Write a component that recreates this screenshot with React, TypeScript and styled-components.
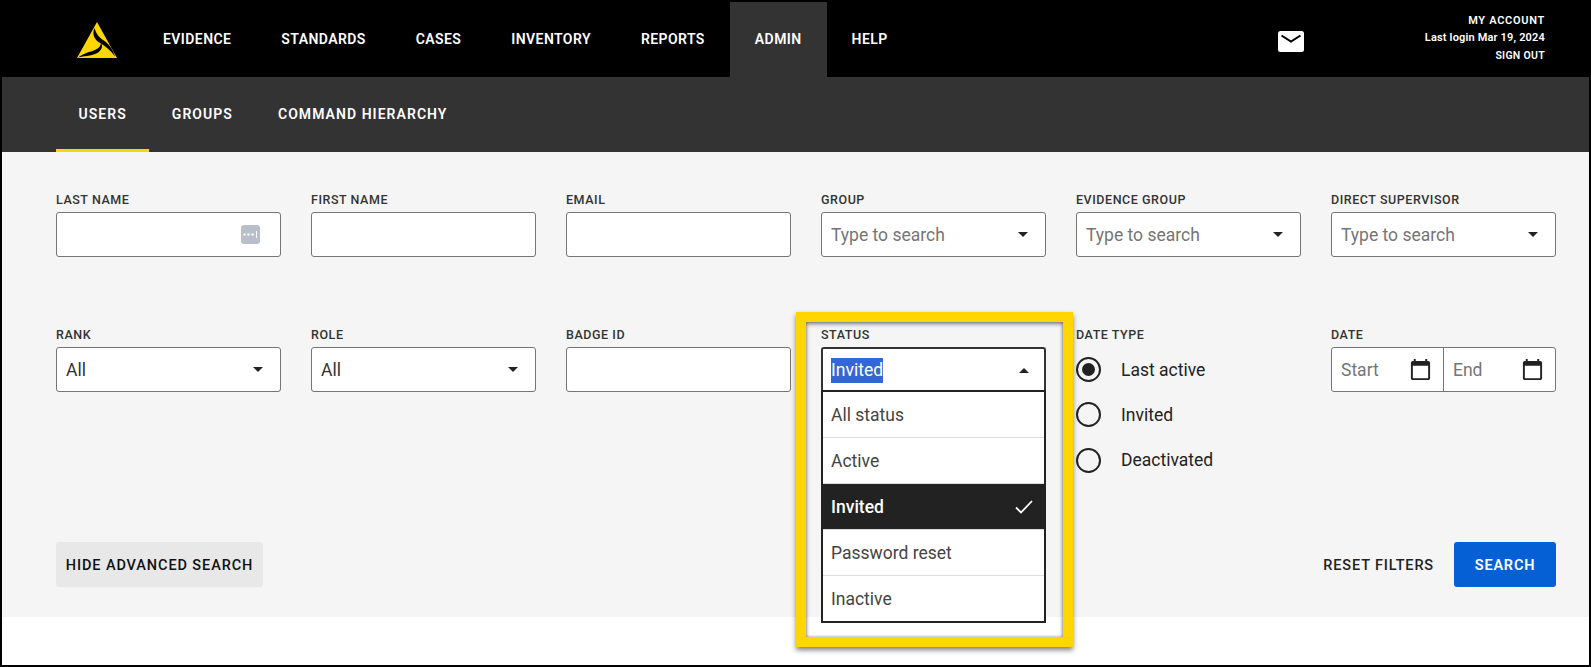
import * as React from "react";
import styled, { createGlobalStyle } from "styled-components";

const GlobalStyle = createGlobalStyle`
  html, body { margin: 0; padding: 0; background: #fff; }
  body { font-family: Roboto, "Liberation Sans", sans-serif; }
  * { box-sizing: border-box; }
`;

const Frame = styled.div`
  width: 1591px;
  height: 667px;
  border: 2px solid #000;
  overflow: hidden;
  background: #fff;
  display: flex;
  flex-direction: column;
`;

const Header = styled.header`
  height: 75px;
  background: #000;
  display: flex;
  align-items: stretch;
  padding: 0 44px 0 74px;
`;

const LogoSlot = styled.div`
  width: 62px;
  display: flex;
  align-items: center;
  padding-top: 2px;
`;

const NavLink = styled.a<{ $active?: boolean }>`
  display: flex;
  align-items: center;
  padding: 0 25px 2px;
  color: #fff;
  font-size: 14px;
  font-weight: 600;
  letter-spacing: 0.42px;
  background: ${(p) => (p.$active ? "#333" : "transparent")};
`;

const HeaderRight = styled.div`
  margin-left: auto;
  display: flex;
  align-items: center;
`;

const MailSlot = styled.div`
  display: flex;
  margin-right: 121px;
  margin-top: 4px;
`;

const AccountBlock = styled.div`
  display: flex;
  flex-direction: column;
  align-items: flex-end;
  gap: 4px;
  color: #fff;
  line-height: 13.5px;
  font-weight: 600;
  margin-top: -3px;
`;

const AccountLine = styled.span<{ $size: number; $spacing: number }>`
  font-size: ${(p) => p.$size}px;
  letter-spacing: ${(p) => p.$spacing}px;
`;

const SubNav = styled.nav`
  height: 75px;
  background: #333;
  display: flex;
  padding-left: 54px;
`;

const SubLink = styled.a<{ $active?: boolean }>`
  display: flex;
  align-items: center;
  padding: 3px 22.5px 2px;
  color: #fff;
  font-size: 14px;
  font-weight: 600;
  letter-spacing: 1.05px;
  border-bottom: 3px solid ${(p) => (p.$active ? "#ffd600" : "transparent")};
`;

const Content = styled.main`
  background: #f5f5f5;
  height: 465px;
  padding: 40px 33px 30px 54px;
`;

const FilterGrid = styled.div`
  display: grid;
  grid-template-columns: repeat(6, 225px);
  column-gap: 30px;
  row-gap: 70px;
  align-items: start;
`;

const Field = styled.div`
  position: relative;
`;

const Label = styled.label`
  display: block;
  height: 16px;
  margin-bottom: 4px;
  font-size: 12.5px;
  line-height: 16px;
  font-weight: 500;
  letter-spacing: 0.55px;
  color: #333;
`;

const TextBox = styled.div`
  height: 45px;
  background: #fff;
  border: 1px solid #757575;
  border-radius: 3px;
  display: flex;
  align-items: center;
  padding: 0 9px;
  font-size: 17.5px;
  color: #333;
`;

const KeyIcon = styled.svg`
  margin-left: auto;
  margin-right: 11px;
`;

const Placeholder = styled.span`
  color: #757575;
`;

const Caret = styled.span<{ $open?: boolean }>`
  margin-left: auto;
  margin-right: 8px;
  width: 0;
  height: 0;
  border-left: 5px solid transparent;
  border-right: 5px solid transparent;
  ${(p) =>
    p.$open ? "border-bottom: 5px solid #222;" : "border-top: 5px solid #222;"}
`;

const Combo = styled(TextBox)<{ $open?: boolean }>`
  ${(p) =>
    p.$open &&
    "height: 45px; border: 2px solid #333; border-bottom: 0; padding: 0 7px 0 8px; border-radius: 3px 3px 0 0;"}
`;

const Selection = styled.span`
  background: #3367d6;
  color: #fff;
  line-height: 25px;
`;

const Menu = styled.ul`
  position: absolute;
  z-index: 2;
  top: 63px;
  left: 0;
  right: 0;
  margin: 0;
  padding: 0;
  list-style: none;
  background: #fff;
  border: 2px solid #222;
`;

const MenuItem = styled.li<{ $selected?: boolean }>`
  height: 46px;
  display: flex;
  align-items: center;
  justify-content: space-between;
  padding: 0 10px 0 8px;
  font-size: 17.5px;
  font-weight: ${(p) => (p.$selected ? 500 : 400)};
  color: ${(p) => (p.$selected ? "#fff" : "#444")};
  background: ${(p) => (p.$selected ? "#222" : "#fff")};
  border-bottom: 1px solid #ddd;
  &:last-child {
    border-bottom: 0;
    height: 45px;
  }
`;

const Callout = styled.div`
  position: absolute;
  z-index: 3;
  top: -15px;
  left: -25px;
  width: 277px;
  height: 335px;
  border: 10px solid #ffd600;
  pointer-events: none;
  box-shadow: 0 3px 5px rgba(0, 0, 0, 0.5), inset 0 2px 4px rgba(0, 0, 0, 0.45),
    inset 0 0 3px rgba(0, 0, 0, 0.35);
`;

const RadioGroup = styled.div`
  display: flex;
  flex-direction: column;
`;

const RadioRow = styled.div`
  height: 45.3px;
  display: flex;
  align-items: center;
  gap: 20px;
  font-size: 17.5px;
  color: #222;
`;

const RadioMark = styled.span<{ $checked?: boolean }>`
  width: 25px;
  height: 25px;
  border: 2px solid #222;
  border-radius: 50%;
  display: flex;
  align-items: center;
  justify-content: center;
  &::after {
    content: "";
    display: ${(p) => (p.$checked ? "block" : "none")};
    width: 13px;
    height: 13px;
    border-radius: 50%;
    background: #222;
  }
`;

const DateRange = styled.div`
  height: 45px;
  display: flex;
  background: #fff;
  border: 1px solid #757575;
  border-radius: 3px;
`;

const DatePart = styled.div`
  flex: 1;
  display: flex;
  align-items: center;
  justify-content: space-between;
  padding: 0 11px 0 9px;
  font-size: 17.5px;
  color: #757575;
  & + & {
    border-left: 1px solid #757575;
  }
`;

const Actions = styled.div`
  display: flex;
  align-items: center;
  margin-top: 59px;
`;

const ToggleButton = styled.button`
  height: 45px;
  width: 207px;
  border: 0;
  border-radius: 3px;
  background: #e8e8e8;
  color: #111;
  font-family: inherit;
  font-size: 14.5px;
  font-weight: 500;
  letter-spacing: 0.9px;
  padding: 2px 0 0;
`;

const ResetButton = styled.button`
  margin-left: auto;
  margin-right: 20px;
  border: 0;
  background: none;
  padding: 2px 0 0;
  color: #222;
  font-family: inherit;
  font-size: 14.5px;
  font-weight: 500;
  letter-spacing: 0.85px;
`;

const SearchButton = styled.button`
  height: 45px;
  width: 102px;
  border: 0;
  border-radius: 3px;
  background: #0560d6;
  color: #fff;
  font-family: inherit;
  font-size: 14.5px;
  font-weight: 600;
  letter-spacing: 0.8px;
  padding: 2px 0 0;
`;

const Logo = () => (
  <svg width="42" height="38" viewBox="0 0 42 38">
    <path d="M21 0 L41 36 L1 36 Z" fill="#ffd600" />
    <path
      d="M18.5 6 C15.5 13 19 18 24 21 C30 24.5 35 29 39 34.5 C37 27 32 21 27 18 C22 14.5 20 11 18.5 6 Z"
      fill="#000"
    />
    <path
      d="M2 35.5 C8 31 14 30 19 28 C23 26 25 24 25 20.5 C28 26 24 30 19 32 C14 34 8 34 2 35.5 Z"
      fill="#000"
    />
  </svg>
);

const MailIcon = () => (
  <svg width="26" height="21" viewBox="0 0 26 21">
    <rect width="26" height="21" rx="2.5" fill="#fff" />
    <path d="M3.5 4.5 L13 10.5 L22.5 4.5" fill="none" stroke="#000" strokeWidth="2" />
  </svg>
);

const CalendarIcon = () => (
  <svg width="23" height="23" viewBox="0 0 24 24">
    <path
      fill="#222"
      d="M20 3h-1V1h-2v2H7V1H5v2H4c-1.1 0-2 .9-2 2v16c0 1.1.9 2 2 2h16c1.1 0 2-.9 2-2V5c0-1.1-.9-2-2-2zm0 18H4V8h16v13z"
    />
  </svg>
);

const CheckIcon = () => (
  <svg width="20" height="16" viewBox="0 0 20 16">
    <path d="M2 8.5 L7 13.5 L18 2" fill="none" stroke="#fff" strokeWidth="1.8" />
  </svg>
);

const PasswordKeyIcon = () => (
  <KeyIcon width="19" height="19" viewBox="0 0 19 19">
    <rect width="19" height="19" rx="3" fill="#b9bfca" />
    <circle cx="3.5" cy="9.5" r="1.2" fill="#fff" />
    <circle cx="7.5" cy="9.5" r="1.2" fill="#fff" />
    <circle cx="11.5" cy="9.5" r="1.2" fill="#fff" />
    <rect x="15" y="6" width="1" height="7" fill="#fff" />
  </KeyIcon>
);

const navItems = ["EVIDENCE", "STANDARDS", "CASES", "INVENTORY", "REPORTS", "ADMIN", "HELP"];
const statusOptions = ["All status", "Active", "Invited", "Password reset", "Inactive"];
const dateTypes = ["Last active", "Invited", "Deactivated"];

export default function App() {
  return (
    <Frame>
      <GlobalStyle />
      <Header>
        <LogoSlot>
          <Logo />
        </LogoSlot>
        {navItems.map((item) => (
          <NavLink key={item} $active={item === "ADMIN"}>
            {item}
          </NavLink>
        ))}
        <HeaderRight>
          <MailSlot>
            <MailIcon />
          </MailSlot>
          <AccountBlock>
            <AccountLine $size={11} $spacing={0.7}>MY ACCOUNT</AccountLine>
            <AccountLine $size={11} $spacing={0.17}>Last login Mar 19, 2024</AccountLine>
            <AccountLine $size={10.5} $spacing={0.3}>SIGN OUT</AccountLine>
          </AccountBlock>
        </HeaderRight>
      </Header>
      <SubNav>
        <SubLink $active>USERS</SubLink>
        <SubLink>GROUPS</SubLink>
        <SubLink>COMMAND HIERARCHY</SubLink>
      </SubNav>
      <Content>
        <FilterGrid>
          <Field>
            <Label>LAST NAME</Label>
            <TextBox>
              <PasswordKeyIcon />
            </TextBox>
          </Field>
          <Field>
            <Label>FIRST NAME</Label>
            <TextBox />
          </Field>
          <Field>
            <Label>EMAIL</Label>
            <TextBox />
          </Field>
          {["GROUP", "EVIDENCE GROUP", "DIRECT SUPERVISOR"].map((name) => (
            <Field key={name}>
              <Label>{name}</Label>
              <Combo>
                <Placeholder>Type to search</Placeholder>
                <Caret />
              </Combo>
            </Field>
          ))}
          <Field>
            <Label>RANK</Label>
            <Combo>
              All
              <Caret />
            </Combo>
          </Field>
          <Field>
            <Label>ROLE</Label>
            <Combo>
              All
              <Caret />
            </Combo>
          </Field>
          <Field>
            <Label>BADGE ID</Label>
            <TextBox />
          </Field>
          <Field>
            <Label>STATUS</Label>
            <Combo $open>
              <Selection>Invited</Selection>
              <Caret $open />
            </Combo>
            <Menu>
              {statusOptions.map((option) => (
                <MenuItem key={option} $selected={option === "Invited"}>
                  {option}
                  {option === "Invited" && <CheckIcon />}
                </MenuItem>
              ))}
            </Menu>
            <Callout />
          </Field>
          <Field>
            <Label>DATE TYPE</Label>
            <RadioGroup>
              {dateTypes.map((type, i) => (
                <RadioRow key={type}>
                  <RadioMark $checked={i === 0} />
                  {type}
                </RadioRow>
              ))}
            </RadioGroup>
          </Field>
          <Field>
            <Label>DATE</Label>
            <DateRange>
              <DatePart>
                Start
                <CalendarIcon />
              </DatePart>
              <DatePart>
                End
                <CalendarIcon />
              </DatePart>
            </DateRange>
          </Field>
        </FilterGrid>
        <Actions>
          <ToggleButton>HIDE ADVANCED SEARCH</ToggleButton>
          <ResetButton>RESET FILTERS</ResetButton>
          <SearchButton>SEARCH</SearchButton>
        </Actions>
      </Content>
    </Frame>
  );
}
